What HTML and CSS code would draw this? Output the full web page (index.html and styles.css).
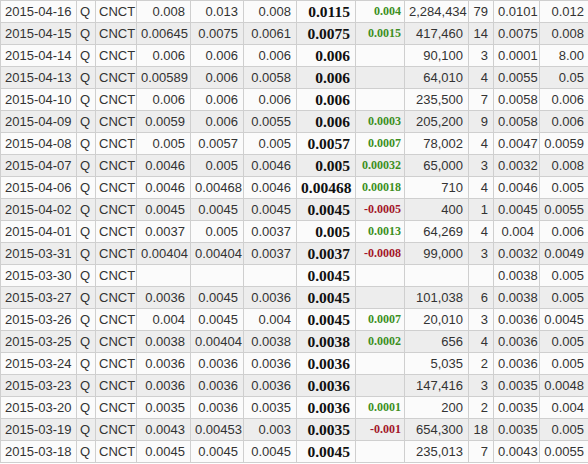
FILE: index.html
```html
<!DOCTYPE html>
<html>
<head>
<meta charset="utf-8">
<link rel="stylesheet" href="styles.css">
</head>
<body>
<table class="quotes">
  <colgroup>
    <col class="c-date"><col class="c-q"><col class="c-sym"><col class="c-open"><col class="c-high"><col class="c-low"><col class="c-close"><col class="c-chg"><col class="c-vol"><col class="c-trd"><col class="c-a"><col class="c-b">
  </colgroup>
  <tbody>
    <tr><td class="date">2015-04-16</td><td class="q">Q</td><td class="sym">CNCT</td><td class="num">0.008</td><td class="num">0.013</td><td class="num">0.008</td><td class="close">0.0115</td><td class="chg up">0.004</td><td class="num">2,284,434</td><td class="num">79</td><td class="num">0.0101</td><td class="num">0.012</td></tr>
    <tr><td class="date">2015-04-15</td><td class="q">Q</td><td class="sym">CNCT</td><td class="num">0.00645</td><td class="num">0.0075</td><td class="num">0.0061</td><td class="close">0.0075</td><td class="chg up">0.0015</td><td class="num">417,460</td><td class="num">14</td><td class="num">0.0075</td><td class="num">0.008</td></tr>
    <tr><td class="date">2015-04-14</td><td class="q">Q</td><td class="sym">CNCT</td><td class="num">0.006</td><td class="num">0.006</td><td class="num">0.006</td><td class="close">0.006</td><td class="chg"></td><td class="num">90,100</td><td class="num">3</td><td class="num">0.0001</td><td class="num">8.00</td></tr>
    <tr><td class="date">2015-04-13</td><td class="q">Q</td><td class="sym">CNCT</td><td class="num">0.00589</td><td class="num">0.006</td><td class="num">0.0058</td><td class="close">0.006</td><td class="chg"></td><td class="num">64,010</td><td class="num">4</td><td class="num">0.0055</td><td class="num">0.05</td></tr>
    <tr><td class="date">2015-04-10</td><td class="q">Q</td><td class="sym">CNCT</td><td class="num">0.006</td><td class="num">0.006</td><td class="num">0.006</td><td class="close">0.006</td><td class="chg"></td><td class="num">235,500</td><td class="num">7</td><td class="num">0.0058</td><td class="num">0.006</td></tr>
    <tr><td class="date">2015-04-09</td><td class="q">Q</td><td class="sym">CNCT</td><td class="num">0.0059</td><td class="num">0.006</td><td class="num">0.0055</td><td class="close">0.006</td><td class="chg up">0.0003</td><td class="num">205,200</td><td class="num">9</td><td class="num">0.0058</td><td class="num">0.006</td></tr>
    <tr><td class="date">2015-04-08</td><td class="q">Q</td><td class="sym">CNCT</td><td class="num">0.005</td><td class="num">0.0057</td><td class="num">0.005</td><td class="close">0.0057</td><td class="chg up">0.0007</td><td class="num">78,002</td><td class="num">4</td><td class="num">0.0047</td><td class="num">0.0059</td></tr>
    <tr><td class="date">2015-04-07</td><td class="q">Q</td><td class="sym">CNCT</td><td class="num">0.0046</td><td class="num">0.005</td><td class="num">0.0046</td><td class="close">0.005</td><td class="chg up">0.00032</td><td class="num">65,000</td><td class="num">3</td><td class="num">0.0032</td><td class="num">0.008</td></tr>
    <tr><td class="date">2015-04-06</td><td class="q">Q</td><td class="sym">CNCT</td><td class="num">0.0046</td><td class="num">0.00468</td><td class="num">0.0046</td><td class="close">0.00468</td><td class="chg up">0.00018</td><td class="num">710</td><td class="num">4</td><td class="num">0.0046</td><td class="num">0.005</td></tr>
    <tr><td class="date">2015-04-02</td><td class="q">Q</td><td class="sym">CNCT</td><td class="num">0.0045</td><td class="num">0.0045</td><td class="num">0.0045</td><td class="close">0.0045</td><td class="chg down">-0.0005</td><td class="num">400</td><td class="num">1</td><td class="num">0.0045</td><td class="num">0.0055</td></tr>
    <tr><td class="date">2015-04-01</td><td class="q">Q</td><td class="sym">CNCT</td><td class="num">0.0037</td><td class="num">0.005</td><td class="num">0.0037</td><td class="close">0.005</td><td class="chg up">0.0013</td><td class="num">64,269</td><td class="num">4</td><td class="num">0.004</td><td class="num">0.006</td></tr>
    <tr><td class="date">2015-03-31</td><td class="q">Q</td><td class="sym">CNCT</td><td class="num">0.00404</td><td class="num">0.00404</td><td class="num">0.0037</td><td class="close">0.0037</td><td class="chg down">-0.0008</td><td class="num">99,000</td><td class="num">3</td><td class="num">0.0032</td><td class="num">0.0049</td></tr>
    <tr><td class="date">2015-03-30</td><td class="q">Q</td><td class="sym">CNCT</td><td class="num"></td><td class="num"></td><td class="num"></td><td class="close">0.0045</td><td class="chg"></td><td class="num"></td><td class="num"></td><td class="num">0.0038</td><td class="num">0.005</td></tr>
    <tr><td class="date">2015-03-27</td><td class="q">Q</td><td class="sym">CNCT</td><td class="num">0.0036</td><td class="num">0.0045</td><td class="num">0.0036</td><td class="close">0.0045</td><td class="chg"></td><td class="num">101,038</td><td class="num">6</td><td class="num">0.0038</td><td class="num">0.005</td></tr>
    <tr><td class="date">2015-03-26</td><td class="q">Q</td><td class="sym">CNCT</td><td class="num">0.004</td><td class="num">0.0045</td><td class="num">0.004</td><td class="close">0.0045</td><td class="chg up">0.0007</td><td class="num">20,010</td><td class="num">3</td><td class="num">0.0036</td><td class="num">0.0045</td></tr>
    <tr><td class="date">2015-03-25</td><td class="q">Q</td><td class="sym">CNCT</td><td class="num">0.0038</td><td class="num">0.00404</td><td class="num">0.0038</td><td class="close">0.0038</td><td class="chg up">0.0002</td><td class="num">656</td><td class="num">4</td><td class="num">0.0036</td><td class="num">0.005</td></tr>
    <tr><td class="date">2015-03-24</td><td class="q">Q</td><td class="sym">CNCT</td><td class="num">0.0036</td><td class="num">0.0036</td><td class="num">0.0036</td><td class="close">0.0036</td><td class="chg"></td><td class="num">5,035</td><td class="num">2</td><td class="num">0.0036</td><td class="num">0.005</td></tr>
    <tr><td class="date">2015-03-23</td><td class="q">Q</td><td class="sym">CNCT</td><td class="num">0.0036</td><td class="num">0.0036</td><td class="num">0.0036</td><td class="close">0.0036</td><td class="chg"></td><td class="num">147,416</td><td class="num">3</td><td class="num">0.0035</td><td class="num">0.0048</td></tr>
    <tr><td class="date">2015-03-20</td><td class="q">Q</td><td class="sym">CNCT</td><td class="num">0.0035</td><td class="num">0.0036</td><td class="num">0.0035</td><td class="close">0.0036</td><td class="chg up">0.0001</td><td class="num">200</td><td class="num">2</td><td class="num">0.0035</td><td class="num">0.004</td></tr>
    <tr><td class="date">2015-03-19</td><td class="q">Q</td><td class="sym">CNCT</td><td class="num">0.0043</td><td class="num">0.00453</td><td class="num">0.003</td><td class="close">0.0035</td><td class="chg down">-0.001</td><td class="num">654,300</td><td class="num">18</td><td class="num">0.0035</td><td class="num">0.005</td></tr>
    <tr><td class="date">2015-03-18</td><td class="q">Q</td><td class="sym">CNCT</td><td class="num">0.0045</td><td class="num">0.0045</td><td class="num">0.0045</td><td class="close">0.0045</td><td class="chg"></td><td class="num">235,013</td><td class="num">7</td><td class="num">0.0043</td><td class="num">0.0055</td></tr>
  </tbody>
</table>
</body>
</html>
```
FILE: styles.css
```css
html, body {
  margin: 0;
  padding: 0;
  background: #ffffff;
}

.quotes {
  border-collapse: collapse;
  table-layout: fixed;
  width: 589px;
  font-family: "Liberation Sans", Arial, sans-serif;
  font-size: 13px;
  color: #333333;
}

.c-date { width: 76px; }
.c-q { width: 19px; }
.c-sym { width: 41px; }
.c-open { width: 54px; }
.c-high { width: 53px; }
.c-low { width: 53px; }
.c-close { width: 59px; }
.c-chg { width: 49px; }
.c-vol { width: 64px; }
.c-trd { width: 25px; }
.c-a { width: 46px; }
.c-b { width: 50px; }

.quotes td {
  border: 1px solid #cfcfcf;
  height: 21px;
  padding: 0 4px;
  white-space: nowrap;
  overflow: hidden;
  line-height: 21px;
}

.quotes tr:nth-child(odd) td { background: #fbfbfb; }
.quotes tr:nth-child(even) td { background: #ededed; }

.quotes td.date { text-align: left; padding-left: 4px; }
.quotes td.q { text-align: left; padding: 0 3px; }
.quotes td.sym { text-align: left; padding: 0 3px; }
.quotes td.num { text-align: right; padding-right: 5px; }

.quotes td.close {
  text-align: right;
  padding-right: 5px;
  font-family: "Liberation Serif", "Times New Roman", serif;
  font-weight: bold;
  font-size: 15.5px;
  color: #111111;
}

.quotes td.chg {
  text-align: right;
  padding-right: 3px;
  font-family: "Liberation Serif", "Times New Roman", serif;
  font-weight: bold;
  font-size: 12px;
}

.quotes td.up { color: #3d8f1f; }
.quotes td.down { color: #a3172a; }
```
